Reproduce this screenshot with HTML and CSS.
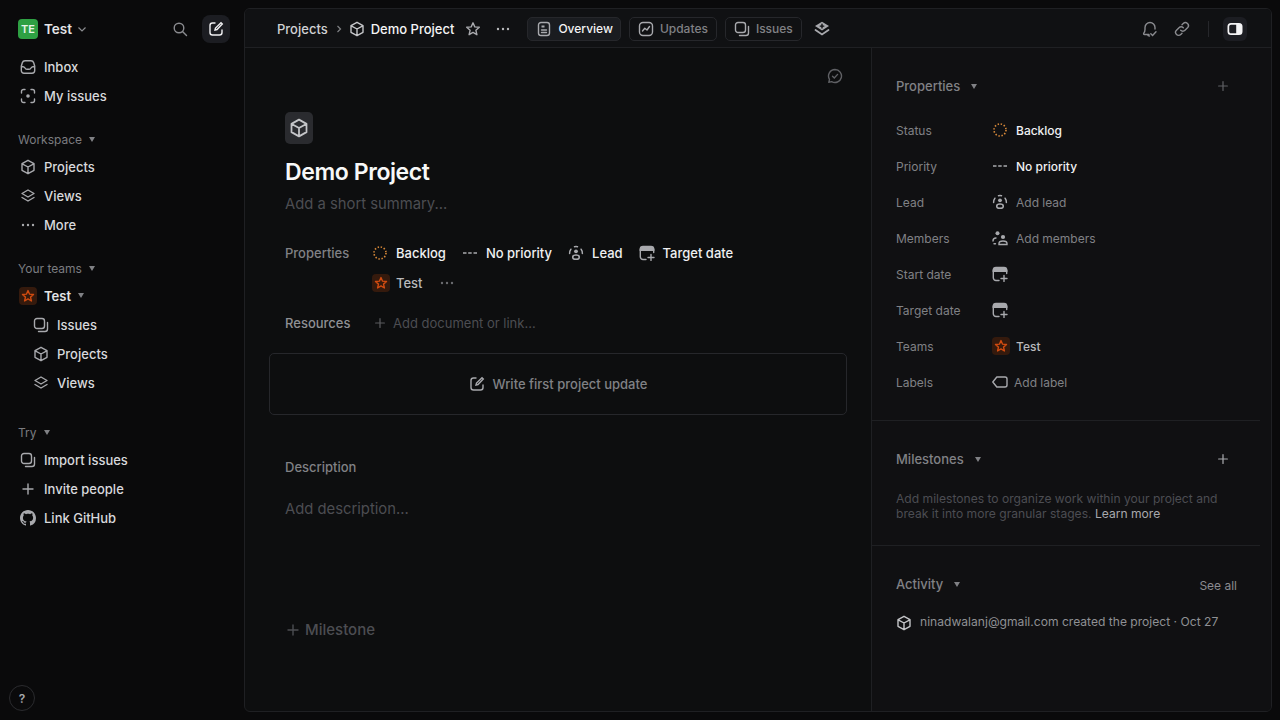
FILE: index.html
```html
<!DOCTYPE html>
<html>

<head>
	<meta charset="utf-8">
	<title>Demo Project</title>
	<link rel="stylesheet" href="styles.css">
</head>

<body>
	<!-- icon set -->
	<svg class="defs" width="0" height="0">
		<symbol id="i-inbox" viewBox="0 0 16 16"><path d="M5 1.800h6c1.400 0 2.300.8 2.700 2l1 3.400V11.500c0 1.500-1.100 2.700-2.700 2.700H4c-1.600 0-2.700-1.200-2.700-2.700V7.200l1-3.400c.4-1.200 1.300-2 2.700-2Z M1.500 7.500c2 0 3 .5 3.500 1.500.4.800 1 1.300 1.800 1.300h2.400c.8 0 1.400-.5 1.800-1.300.5-1 1.500-1.500 3.500-1.500"/></symbol>
		<symbol id="i-myissues" viewBox="0 0 16 16"><path d="M1.500 5V3.500a2 2 0 0 1 2-2H5 M11 1.500h1.500a2 2 0 0 1 2 2V5 M14.500 11v1.500a2 2 0 0 1-2 2H11 M5 14.500H3.500a2 2 0 0 1-2-2V11"/><circle class="fill" stroke="none" cx="8" cy="8" r="1.800"/></symbol>
		<symbol id="i-cube" viewBox="0 0 16 16"><path d="M8 1.300 14 4.700v6.600L8 14.700 2 11.300V4.700Z M2.200 4.800 8 8l5.800-3.200 M8 8v6.500" stroke-linejoin="round"/></symbol>
		<symbol id="i-layers" viewBox="0 0 16 16"><path d="M8 2 14 5.500 8 9 2 5.500Z M2 9.500 8 13l6-3.500" stroke-linejoin="round"/></symbol>
		<symbol id="i-layers-add" viewBox="0 0 16 16"><path class="fill" stroke="none" d="M8 .8 15 5 8 9.600 1 5Z"/><path d="M1.500 9 8 13.500 14.500 9" stroke-width="1.800"/><path d="M8 3.300v3.600M6.200 5.100h3.600" stroke="#101113"/></symbol>
		<symbol id="i-dots" viewBox="0 0 16 16"><circle class="fill" stroke="none" cx="3" cy="8" r="1.200"/><circle class="fill" stroke="none" cx="8" cy="8" r="1.200"/><circle class="fill" stroke="none" cx="13" cy="8" r="1.200"/></symbol>
		<symbol id="i-issues" viewBox="0 0 16 16"><rect x="1.500" y="1.500" width="10" height="10" rx="2.500"/><path d="M14.500 5.500v6.500a2.500 2.500 0 0 1-2.500 2.500H5.500"/></symbol>
		<symbol id="i-plus" viewBox="0 0 16 16"><path d="M8 3v10M3 8h10"/></symbol>
		<symbol id="i-github" viewBox="0 0 16 16"><path class="fill" stroke="none" d="M8 0C3.580 0 0 3.580 0 8c0 3.540 2.290 6.530 5.470 7.590.4.070.55-.17.55-.38 0-.19-.01-.82-.01-1.490-2.010.370-2.530-.49-2.690-.94-.09-.23-.48-.94-.82-1.130-.28-.15-.68-.52-.01-.53.630-.01 1.080.58 1.230.82.720 1.210 1.870.87 2.330.66.070-.52.280-.87.510-1.070-1.780-.2-3.640-.89-3.640-3.950 0-.87.310-1.590.820-2.150-.08-.2-.36-1.020.08-2.120 0 0 .67-.21 2.200.82.640-.18 1.320-.27 2-.27s1.360.09 2 .27c1.530-1.040 2.200-.82 2.200-.82.440 1.100.160 1.920.08 2.120.51.560.82 1.270.82 2.150 0 3.070-1.870 3.750-3.650 3.950.29.250.54.730.54 1.480 0 1.070-.01 1.930-.01 2.200 0 .21.150.46.550.38A8.010 8.010 0 0 0 16 8c0-4.420-3.580-8-8-8Z"/></symbol>
		<symbol id="i-star" viewBox="0 0 16 16"><path d="M8 1.800 9.800 5.900l4.500.4-3.400 3 1 4.400L8 11.400l-3.900 2.300 1-4.400-3.400-3 4.500-.4Z" stroke-linejoin="round"/></symbol>
		<symbol id="i-compose" viewBox="0 0 16 16"><path d="M7 2H4.500A2.500 2.500 0 0 0 2 4.500v7A2.500 2.500 0 0 0 4.500 14h7a2.500 2.500 0 0 0 2.500-2.500V9 M7 9l.5-2L13 1.700 14.300 3 9 8.500Z"/></symbol>
		<symbol id="i-search" viewBox="0 0 16 16"><circle cx="7" cy="7" r="4.800"/><path d="m10.500 10.500 4 4"/></symbol>
		<symbol id="i-doc" viewBox="0 0 16 16"><rect x="2.500" y="1.500" width="11" height="13" rx="2.500"/><path class="fill" d="M5.500 4.500h3v2h-3z" stroke="none"/><path d="M5.500 9h5M5.500 11.500h5"/></symbol>
		<symbol id="i-updates" viewBox="0 0 16 16"><rect x="1.500" y="1.500" width="13" height="13" rx="3.500"/><path d="m4.500 10 2.300-2.800L9 9l2.500-3.500" stroke-linejoin="round"/></symbol>
		<symbol id="i-bell" viewBox="0 0 16 16"><path d="M7 13.500H2.500c-.8 0-1.100-.7-.7-1.300.7-1 1.200-2 1.200-3.700V6.500a5 5 0 0 1 10 0V8 M5.500 13.500C5.800 14.600 6.600 15 7.500 15 M8.800 12.700l1.800 1.800 3.400-3.700"/></symbol>
		<symbol id="i-link" viewBox="0 0 16 16"><path d="M6.700 9.300a3 3 0 0 0 4.300 0l2.500-2.500a3 3 0 0 0-4.300-4.300L8 3.700 M9.300 6.700a3 3 0 0 0-4.300 0L2.500 9.200a3 3 0 0 0 4.300 4.300L8 12.300"/></symbol>
		<symbol id="i-panel" viewBox="0 0 16 16"><path class="fill" stroke="none" fill-rule="evenodd" d="M4 2h8a3.500 3.500 0 0 1 3.500 3.500v5A3.500 3.500 0 0 1 12 14H4a3.500 3.500 0 0 1-3.500-3.500v-5A3.500 3.500 0 0 1 4 2Zm0 1.700a1.800 1.800 0 0 0-1.800 1.800v5c0 1 .8 1.800 1.800 1.800h5.200V3.700Z"/></symbol>
		<symbol id="i-backlog" viewBox="0 0 14 14"><circle cx="7" cy="7" r="6" stroke-dasharray="1.400 1.740" stroke-width="1.600"/></symbol>
		<symbol id="i-nopriority" viewBox="0 0 16 16"><path class="fill" stroke="none" d="M1 7.200h3.500v1.500H1zM6.200 7.200h3.500v1.500H6.200zM11.500 7.200H15v1.500h-3.500z"/></symbol>
		<symbol id="i-lead" viewBox="0 0 16 16"><path d="M1.600 8.500A6.500 6.500 0 0 1 2.900 4.200 M6.500 1.700a6.500 6.500 0 0 1 3 0 M13.100 4.200a6.500 6.500 0 0 1 1.300 4.300" stroke-width="1.500"/><circle class="fill" stroke="none" cx="8" cy="6.300" r="1.900"/><ellipse cx="8" cy="12.200" rx="3.300" ry="2.100" stroke-width="1.500"/></symbol>
		<symbol id="i-members" viewBox="0 0 16 16"><circle class="fill" stroke="none" cx="5.500" cy="3.300" r="2"/><circle class="fill" stroke="none" cx="11" cy="7" r="2.100"/><path d="M1 11c0-1.800 1.200-3 3-3 M3.500 13.800H2 M7 14.500v-1c0-1.500 1.500-2.500 4-2.500s4 1 4 2.500v1Z"/></symbol>
		<symbol id="i-date" viewBox="0 0 16 16"><path class="fill" stroke="none" d="M4 .8h8a3.400 3.400 0 0 1 3.400 3.400V6H.6V4.200A3.400 3.400 0 0 1 4 .8Z"/><path d="M7 14.500H4A2.700 2.700 0 0 1 1.300 11.800V4 M14.700 4v3.500 M12 9.500v6 M9 12.500h6"/></symbol>
		<symbol id="i-label" viewBox="0 0 16 16"><path d="M4.800 3h8.200a2 2 0 0 1 2 2v6a2 2 0 0 1-2 2H4.800L.8 8Z" stroke-linejoin="round"/></symbol>
		<symbol id="i-comment" viewBox="0 0 16 16"><path d="M8 1.500a6.500 6.500 0 1 1-3.300 12.100L1.800 14.300l.7-2.900A6.500 6.500 0 0 1 8 1.500Z" stroke-linejoin="round"/><path d="m5.500 8.200 1.800 1.800 3.300-3.600"/></symbol>
	</svg>

	<div class="app">
		<!-- left sidebar -->
		<aside class="sidebar">
			<div class="side-top">
				<span class="avatar">TE</span>
				<span class="team-name">Test</span>
				<svg class="chev-down" width="10" height="10" viewBox="0 0 10 10"><path d="M1.500 3.500 5 7l3.500-3.500"/></svg>
				<span class="spacer"></span>
				<svg class="ico search-ico"><use href="#i-search"/></svg>
				<span class="compose-btn"><svg class="ico"><use href="#i-compose"/></svg></span>
			</div>

			<nav class="nav-first">
				<a class="nav-row"><svg class="ico"><use href="#i-inbox"/></svg>Inbox</a>
				<a class="nav-row"><svg class="ico"><use href="#i-myissues"/></svg>My issues</a>
			</nav>

			<div class="nav-head head-workspace">Workspace <i class="tri"></i></div>
			<nav>
				<a class="nav-row"><svg class="ico"><use href="#i-cube"/></svg>Projects</a>
				<a class="nav-row"><svg class="ico"><use href="#i-layers"/></svg>Views</a>
				<a class="nav-row"><svg class="ico"><use href="#i-dots"/></svg>More</a>
			</nav>

			<div class="nav-head head-teams">Your teams <i class="tri"></i></div>
			<nav>
				<a class="nav-row team-row"><span class="star-badge"><svg class="ico-star"><use href="#i-star"/></svg></span>Test <i class="tri"></i></a>
				<a class="nav-row sub"><svg class="ico"><use href="#i-issues"/></svg>Issues</a>
				<a class="nav-row sub"><svg class="ico"><use href="#i-cube"/></svg>Projects</a>
				<a class="nav-row sub"><svg class="ico"><use href="#i-layers"/></svg>Views</a>
			</nav>

			<div class="nav-head head-try">Try <i class="tri"></i></div>
			<nav>
				<a class="nav-row"><svg class="ico"><use href="#i-issues"/></svg>Import issues</a>
				<a class="nav-row"><svg class="ico"><use href="#i-plus"/></svg>Invite people</a>
				<a class="nav-row"><svg class="ico"><use href="#i-github"/></svg>Link GitHub</a>
			</nav>

			<span class="help">?</span>
		</aside>

		<!-- main panel -->
		<main class="panel">
			<header class="topbar">
				<span class="crumb">Projects</span>
				<svg class="crumb-sep" width="8" height="8" viewBox="0 0 8 8"><path d="M2.500 1 5.500 4l-3 3"/></svg>
				<svg class="ico crumb-ico"><use href="#i-cube"/></svg>
				<span class="crumb-title">Demo Project</span>
				<svg class="ico star-ico"><use href="#i-star"/></svg>
				<svg class="ico dots-ico"><use href="#i-dots"/></svg>
				<span class="tab active"><svg class="ico"><use href="#i-doc"/></svg>Overview</span>
				<span class="tab"><svg class="ico"><use href="#i-updates"/></svg>Updates</span>
				<span class="tab"><svg class="ico"><use href="#i-issues"/></svg>Issues</span>
				<svg class="ico layers-ico"><use href="#i-layers-add"/></svg>
				<span class="spacer"></span>
				<svg class="ico bar-ico"><use href="#i-bell"/></svg>
				<svg class="ico bar-ico link-ico"><use href="#i-link"/></svg>
				<span class="bar-sep"></span>
				<span class="panel-btn"><svg class="ico"><use href="#i-panel"/></svg></span>
			</header>

			<div class="panes">
				<section class="content">
					<div class="comment-row"><svg class="ico"><use href="#i-comment"/></svg></div>
					<div class="project-icon"><svg class="ico-big"><use href="#i-cube"/></svg></div>
					<h1 class="title">Demo Project</h1>
					<div class="summary">Add a short summary...</div>

					<div class="prop-line">
						<div class="prop-label">Properties</div>
						<div class="prop-values">
							<span class="prop-item"><svg class="ico-status"><use href="#i-backlog"/></svg>Backlog</span>
							<span class="prop-item"><svg class="ico"><use href="#i-nopriority"/></svg>No priority</span>
							<span class="prop-item"><svg class="ico"><use href="#i-lead"/></svg>Lead</span>
							<span class="prop-item"><svg class="ico"><use href="#i-date"/></svg>Target date</span>
							<span class="prop-item dim"><span class="star-badge"><svg class="ico-star"><use href="#i-star"/></svg></span>Test</span>
							<span class="prop-item"><svg class="ico more-ico"><use href="#i-dots"/></svg></span>
						</div>
					</div>

					<div class="res-line">
						<div class="prop-label">Resources</div>
						<span class="res-add"><svg class="ico"><use href="#i-plus"/></svg>Add document or link...</span>
					</div>

					<div class="update-card"><svg class="ico"><use href="#i-compose"/></svg>Write first project update</div>

					<div class="desc-label">Description</div>
					<div class="desc-input">Add description...</div>
					<div class="add-milestone"><svg class="ico"><use href="#i-plus"/></svg>Milestone</div>
				</section>

				<aside class="details">
					<section class="block block-props">
						<div class="block-head">
							<span class="block-title">Properties <i class="tri"></i></span>
							<svg class="ico plus-dim"><use href="#i-plus"/></svg>
						</div>
						<div class="rows">
							<div class="row"><span class="row-label">Status</span><span class="row-icon"><svg class="ico-status"><use href="#i-backlog"/></svg></span><span class="val-strong">Backlog</span></div>
							<div class="row"><span class="row-label">Priority</span><span class="row-icon"><svg class="ico"><use href="#i-nopriority"/></svg></span><span class="val-strong">No priority</span></div>
							<div class="row"><span class="row-label">Lead</span><span class="row-icon"><svg class="ico"><use href="#i-lead"/></svg></span><span class="val">Add lead</span></div>
							<div class="row"><span class="row-label">Members</span><span class="row-icon"><svg class="ico"><use href="#i-members"/></svg></span><span class="val">Add members</span></div>
							<div class="row"><span class="row-label">Start date</span><span class="row-icon"><svg class="ico"><use href="#i-date"/></svg></span></div>
							<div class="row"><span class="row-label">Target date</span><span class="row-icon"><svg class="ico"><use href="#i-date"/></svg></span></div>
							<div class="row"><span class="row-label">Teams</span><span class="row-icon"><span class="star-badge"><svg class="ico-star"><use href="#i-star"/></svg></span></span><span class="val-team">Test</span></div>
							<div class="row"><span class="row-label">Labels</span><span class="row-icon label-icon"><svg class="ico"><use href="#i-label"/></svg></span><span class="val">Add label</span></div>
						</div>
					</section>

					<section class="block block-miles">
						<div class="block-head">
							<span class="block-title">Milestones <i class="tri"></i></span>
							<svg class="ico plus-bright"><use href="#i-plus"/></svg>
						</div>
						<p class="miles-text">Add milestones to organize work within your project and break it into more granular stages. <span class="learn">Learn more</span></p>
					</section>

					<section class="block block-activity">
						<div class="block-head">
							<span class="block-title">Activity <i class="tri"></i></span>
							<span class="see-all">See all</span>
						</div>
						<div class="activity-row"><svg class="ico"><use href="#i-cube"/></svg><span>ninadwalanj@gmail.com created the project · Oct 27</span></div>
					</section>
				</aside>
			</div>
		</main>
	</div>
</body>

</html>
```

FILE: styles.css
```css
* {
	box-sizing: border-box;
}

html,
body {
	margin: 0;
	height: 720px;
	overflow: hidden;
}

body {
	background-color: #0a0a0b;
	color: #d8d9dc;
	font-family: "Inter", "Liberation Sans", sans-serif;
	font-size: 13px;
	font-weight: 500;
}

.defs {
	display: block;
	height: 0;
}

.ico {
	width: 16px;
	height: 16px;
	flex: none;
	fill: none;
	stroke: currentColor;
	stroke-width: 1.4;
	stroke-linecap: round;
	color: #a8a9ad;
}

.fill {
	fill: currentColor;
}

.spacer {
	flex: 1;
}

.app {
	display: flex;
	height: 720px;
}

/* sidebar */
.sidebar {
	width: 244px;
	flex: none;
	display: flex;
	flex-direction: column;
	padding: 15px 14px 9px 0;
}

.side-top {
	display: flex;
	align-items: center;
	height: 28px;
	padding-left: 18px;
}

.avatar {
	width: 20px;
	height: 20px;
	border-radius: 4px;
	background-color: #2ea043;
	color: #e8f5ea;
	font-size: 11px;
	font-weight: 600;
	display: flex;
	align-items: center;
	justify-content: center;
}

.team-name {
	margin-left: 6px;
	font-size: 13.500px;
	font-weight: 600;
	color: #e4e5e7;
}

.chev-down {
	margin-left: 5px;
	fill: none;
	stroke: #8a8b8f;
	stroke-width: 1.2;
}

.search-ico {
	margin-right: 14px;
	color: #8a8b8f;
}

.compose-btn {
	width: 28px;
	height: 28px;
	border-radius: 8px;
	background-color: #1c1d22;
	display: flex;
	align-items: center;
	justify-content: center;
}

.compose-btn .ico {
	color: #f0f0f2;
}

.nav-first {
	margin-top: 9px;
}

.nav-row {
	display: flex;
	align-items: center;
	height: 29px;
	padding-left: 20px;
	gap: 8px;
	color: #d8d9dc;
}

.nav-row.sub {
	padding-left: 33px;
}

.team-row {
	font-weight: 600;
	color: #e4e5e7;
	padding-left: 19px;
	gap: 7px;
}

.nav-head {
	display: flex;
	align-items: center;
	gap: 7px;
	height: 20px;
	padding-left: 18px;
	margin-bottom: 3px;
	font-size: 12px;
	font-weight: 400;
	color: #7b7c80;
}

.head-workspace {
	margin-top: 19px;
}

.head-teams {
	margin-top: 19px;
}

.head-try {
	margin-top: 25px;
}

.tri {
	display: inline-block;
	width: 0;
	height: 0;
	border-left: 3px solid transparent;
	border-right: 3px solid transparent;
	border-top: 5px solid #808185;
}

.star-badge {
	width: 18px;
	height: 18px;
	border-radius: 4px;
	background-color: #351a0d;
	display: flex;
	align-items: center;
	justify-content: center;
	flex: none;
}

.ico-star {
	width: 14px;
	height: 14px;
	fill: none;
	stroke: #d14b10;
	stroke-width: 1.6;
}

.help {
	margin-top: auto;
	margin-left: 9px;
	width: 26px;
	height: 26px;
	border: 1px solid #2a2b2e;
	border-radius: 50%;
	display: flex;
	align-items: center;
	justify-content: center;
	font-size: 12px;
	font-weight: 600;
	color: #a8a9ad;
}

/* main panel */
.panel {
	width: 1028px;
	height: 704px;
	margin-top: 8px;
	border: 1px solid #1f2023;
	border-radius: 6px;
	background-color: #0d0e0f;
	display: flex;
	flex-direction: column;
	overflow: hidden;
}

.topbar {
	height: 39px;
	flex: none;
	display: flex;
	align-items: center;
	padding: 1px 24px 0 32px;
	border-bottom: 1px solid #1f2023;
	background-color: #101113;
}

.crumb {
	color: #d0d1d4;
}

.crumb-sep {
	margin: 0 6px 0 7px;
	fill: none;
	stroke: #808185;
	stroke-width: 1.2;
}

.crumb-ico {
	color: #c4c5c8;
	margin-right: 6px;
}

.crumb-title {
	color: #f4f4f5;
}

.star-ico {
	margin-left: 11px;
}

.dots-ico {
	margin-left: 14px;
	margin-right: 16px;
	color: #b8b9bc;
}

.tab {
	display: flex;
	align-items: center;
	gap: 6px;
	height: 24px;
	padding: 0 8px;
	margin-right: 8px;
	border: 1px solid #26272b;
	border-radius: 5px;
	font-size: 12px;
	color: #808185;
}

.tab.active {
	padding-right: 7px;
	background-color: #1a1c20;
	color: #f4f4f5;
}

.layers-ico {
	margin-left: 4px;
}

.bar-ico {
	color: #8a8b8f;
}

.link-ico {
	margin-left: 16px;
}

.bar-sep {
	width: 1px;
	height: 16px;
	margin: 0 14px 0 18px;
	background-color: #26272b;
}

.panel-btn {
	width: 24px;
	height: 24px;
	border-radius: 6px;
	background-color: #1c1d22;
	display: flex;
	align-items: center;
	justify-content: center;
}

.panel-btn .ico {
	color: #f4f4f5;
}

.panes {
	flex: 1;
	display: flex;
	min-height: 0;
}

/* left content */
.content {
	width: 626px;
	flex: none;
	padding: 20px 24px 0 40px;
}

.comment-row {
	display: flex;
	justify-content: flex-end;
	padding-right: 4px;
}

.comment-row .ico {
	color: #5f6064;
}

.project-icon {
	width: 28px;
	height: 32px;
	margin-top: 28px;
	border-radius: 5px;
	background-color: #2a2b2f;
	display: flex;
	align-items: center;
	justify-content: center;
}

.ico-big {
	width: 20px;
	height: 20px;
	fill: none;
	stroke: #c4c5c8;
	stroke-width: 1.4;
}

.title {
	margin: 12px 0 0;
	font-size: 23px;
	line-height: 32px;
	font-weight: 600;
	letter-spacing: -0.4px;
	color: #f7f8f8;
}

.summary {
	margin-top: 6px;
	font-size: 14.800px;
	line-height: 20px;
	font-weight: 400;
	color: #4c4d52;
}

.prop-line {
	display: flex;
	margin-top: 24px;
}

.prop-label {
	width: 87px;
	flex: none;
	height: 30px;
	line-height: 30px;
	color: #808185;
}

.prop-values {
	display: flex;
	flex-wrap: wrap;
	width: 380px;
	column-gap: 16px;
}

.prop-item {
	display: flex;
	align-items: center;
	gap: 8px;
	height: 30px;
	color: #f0f0f2;
}

.prop-item.dim {
	color: #b8b9bc;
	gap: 6px;
}

.more-ico {
	color: #6a6b6f;
}

.ico-status {
	width: 14px;
	height: 14px;
	margin: 0 1px;
	flex: none;
	fill: none;
	stroke: #d98a3a;
}

.res-line {
	display: flex;
	margin-top: 10px;
}

.res-line .prop-label {
	color: #8f9094;
}

.res-add {
	display: flex;
	align-items: center;
	gap: 6px;
	padding-left: 1px;
	font-weight: 400;
	color: #4c4d52;
}

.res-add .ico {
	width: 14px;
	height: 14px;
	color: #5a5b5f;
}

.update-card {
	width: 578px;
	height: 62px;
	margin: 15px 0 0 -16px;
	border: 1px solid #26272b;
	border-radius: 5px;
	display: flex;
	align-items: center;
	justify-content: center;
	gap: 8px;
	color: #808185;
}

.desc-label {
	margin-top: 42px;
	line-height: 20px;
	color: #808185;
}

.desc-input {
	margin-top: 22px;
	font-size: 14.800px;
	line-height: 20px;
	font-weight: 400;
	color: #4c4d52;
}

.add-milestone {
	display: flex;
	align-items: center;
	gap: 4px;
	margin-top: 101px;
	font-size: 15px;
	line-height: 20px;
	color: #4c4d52;
}

.add-milestone .ico {
	color: #4c4d52;
}

/* right details */
.details {
	width: 400px;
	flex: none;
	border-left: 1px solid #1f2023;
	background-color: #101012;
}

.block {
	margin-right: 11px;
	padding: 28px 24px 0;
}

.block-props {
	padding-bottom: 20px;
	border-bottom: 1px solid #1f2023;
}

.block-miles {
	padding-bottom: 24px;
	border-bottom: 1px solid #1f2023;
}

.block-head {
	display: flex;
	align-items: center;
	justify-content: space-between;
	height: 20px;
}

.block-title {
	display: flex;
	align-items: center;
	gap: 11px;
	color: #808185;
}

.plus-dim {
	width: 14px;
	height: 14px;
	color: #5f6064;
	margin-right: 6px;
}

.plus-bright {
	width: 14px;
	height: 14px;
	color: #a8a9ad;
	margin-right: 6px;
}

.rows {
	margin-top: 16px;
}

.row {
	display: flex;
	align-items: center;
	height: 36px;
	font-size: 12px;
}

.row-label {
	width: 96px;
	flex: none;
	font-weight: 400;
	color: #808185;
}

.row-icon {
	width: 24px;
	flex: none;
	display: flex;
	align-items: center;
}

.label-icon {
	width: 22px;
}

.val-strong {
	color: #f0f0f2;
}

.val {
	font-weight: 400;
	color: #808185;
}

.val-team {
	color: #b8b9bc;
}

.miles-text {
	margin: 22px 0 0;
	font-size: 12.100px;
	line-height: 15px;
	font-weight: 400;
	color: #4c4d52;
}

.learn {
	color: #a8a9ad;
}

.see-all {
	margin: 2px -1px 0 0;
	font-size: 12px;
	font-weight: 400;
	color: #8a8b8f;
}

.activity-row {
	display: flex;
	align-items: center;
	gap: 8px;
	margin-top: 18px;
	font-size: 12.100px;
	font-weight: 400;
	color: #8f9094;
}

.activity-row .ico {
	margin-top: 3px;
	color: #c4c5c8;
}
```
